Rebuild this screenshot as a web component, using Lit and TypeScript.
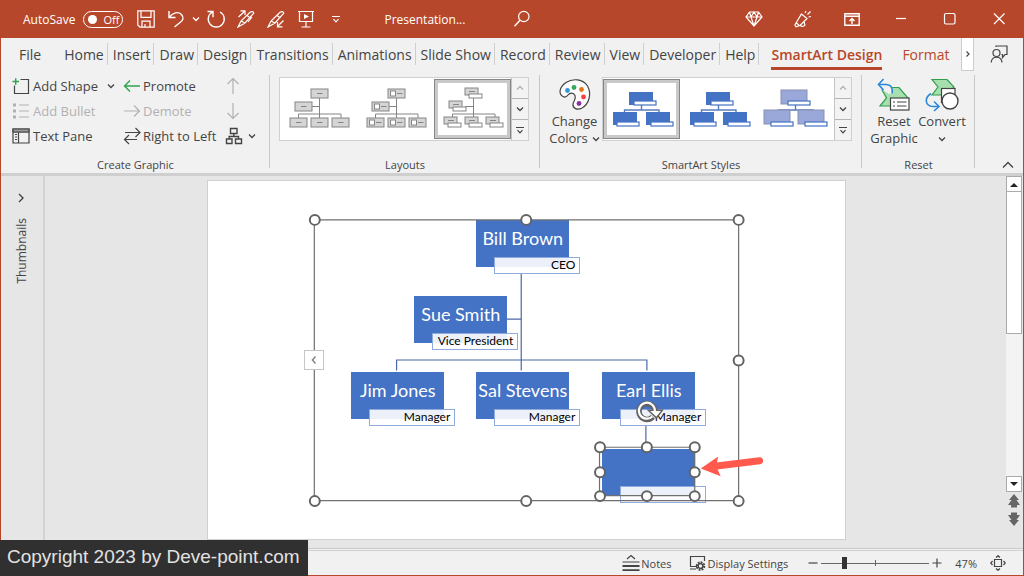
import { LitElement, html, css, svg } from "lit";
import { customElement } from "lit/decorators.js";
import { classMap } from "lit/directives/class-map.js";

type Node = { name: string; role: string; x: number; y: number };

const NODES: Node[] = [
  { name: "Bill Brown", role: "CEO", x: 268, y: 39 },
  { name: "Sue Smith", role: "Vice President", x: 206, y: 115 },
  { name: "Jim Jones", role: "Manager", x: 143, y: 191 },
  { name: "Sal Stevens", role: "Manager", x: 268, y: 191 },
  { name: "Earl Ellis", role: "Manager", x: 394, y: 191 },
  { name: "", role: "", x: 394, y: 268 },
];

const HANDLES: [number, number][] = [
  [107, 39], [319, 39], [532, 39], [532, 180], [107, 321], [319, 321], [532, 321],
  [393, 267], [440, 267], [488, 267], [393, 292], [488, 292], [393, 316], [440, 316], [488, 316],
];

const TABS = ["Home", "Insert", "Draw", "Design", "Transitions", "Animations", "Slide Show", "Record", "Review", "View", "Developer", "Help"];

const icon = (w: number, h: number, body: unknown) =>
  html`<svg class="icon" width=${w} height=${h} viewBox="0 0 ${w} ${h}" aria-hidden="true">${body}</svg>`;

const chevron = (w = 8) => icon(w, 8, svg`<path d="M1 2.5 L${w / 2} 5.5 L${w - 1} 2.5" stroke-width="1.3"/>`);

const I = {
  save: () => icon(18, 18, svg`<path d="M.8 .8H17.2V17.2H3L.8 15Z M4 .8V7.4H14V.8 M5 17V11.2H13V17 M8 17V14"/>`),
  undo: () => icon(18, 18, svg`<path d="M2 1V7.5H8.5 M2 7.5C6 2.5 11 1.200 14.200 4.200C17.500 7.500 16 10.500 13 12.500L7.500 17" stroke-width="1.4"/>`),
  redo: () => icon(20, 18, svg`<path d="M1.500 1.500H7V7.300 M6.500 2A8 8 0 1 0 14 2" stroke-width="1.4"/>`),
  penUp: () => icon(18, 18, svg`<path d="M1 17L4 11L13 2.200Q16 .6 16.800 3.200L8 13Z M4 11L8 13 M10 5.500L13.500 8 M15 7L11 12 M1.500 7L8 1 M3.500 .8H8V5"/>`),
  penDown: () => icon(18, 18, svg`<path d="M1 17L4 11L13 2.200Q16 .6 16.800 3.200L8 13Z M4 11L8 13 M10 5.500L13.500 8 M16.500 10.500L10.500 16.500 M10.500 12V16.800H15.500"/>`),
  present: () => icon(18, 18, svg`<path d="M1 1.500H17 M2.500 1.500V11.500H15.500V1.500 M9 11.500V17 M4.500 17H13.500"/><path d="M7 4L12 6.500L7 9Z" fill="currentColor" stroke="none"/>`),
  more: () => icon(10, 8, svg`<path d="M1 1.500H9 M2.500 4.200L5 6.800L7.500 4.200"/>`),
  search: () => icon(18, 18, svg`<circle cx="10.800" cy="6.500" r="5.200"/><path d="M7 10.300L1.500 16.200" stroke-width="1.4"/>`),
  gem: () => icon(18, 16, svg`<path d="M4.500 1H13.500L17 6L9 15L1 6Z M1 6H17 M6 6L9 15L12 6L9 1L6 6L4.500 1 M12 6L13.500 1"/>`),
  horn: () => icon(18, 18, svg`<path d="M7.500 4L13 8.500L6 15.500L2 16.800L.9 15L2 13Z M2 12.500L5.500 15.800 M6 15.500Q9 17.500 11 15.200L10 12 M11 3L12 1 M13.500 4.500L16.500 1.500 M14.500 7L17 6.500"/>`),
  ribbon: () => icon(16, 13, svg`<path d="M.8 .8H15.200V12.200H.8Z M.8 3.300H15.200 M8 11V5.500 M5.500 8L8 5.500L10.500 8" stroke-width="1.4"/>`),
  min: () => icon(14, 14, svg`<path d="M2 6.500H12"/>`),
  max: () => icon(14, 14, svg`<rect x="1.500" y="1.500" width="10.500" height="10.500" rx="1.500"/>`),
  close: () => icon(14, 14, svg`<path d="M2 1.500L12.500 12 M12.500 1.500L2 12"/>`),
  share: () => icon(18, 18, svg`<path d="M6 2V1H17V9.500H15L12.500 12.500V9.500H11.500"/><circle cx="6.500" cy="8" r="3.500"/><path d="M1.200 17.500C1.500 10.500 11.500 10.500 12 17.500"/>`),
  addShape: () => icon(18, 18, svg`<path d="M8.500 2.500H16.500V16.500H2.500V8.500"/><path class="green" d="M.5 4.500H7 M3.700 1.200V7.700" stroke-width="1.400"/>`),
  bullet: () => icon(18, 18, svg`<path d="M7 3H17 M7 9H17 M7 15H17"/><path d="M1 1.500h3v3H1z M1 7.500h3v3H1z M1 13.500h3v3H1z" fill="currentColor" stroke="none"/>`),
  pane: () => icon(18, 16, svg`<path d="M1 1H17V15H1Z M6.500 4V15 M1 4H17"/><path d="M1 1H17V4H1Z" fill="#999"/><path d="M3 6.500H5 M3 9H5 M3 11.500H5"/>`),
  left: () => icon(18, 14, svg`<path class="green" d="M17 7H1.500 M7 1.500L1.500 7L7 12.500" stroke-width="1.400"/>`),
  right: () => icon(18, 14, svg`<path d="M1 7H16.500 M11 1.500L16.500 7L11 12.500"/>`),
  swap: () => icon(18, 18, svg`<path d="M2 5.500H17 M12.500 1L17 5.500L12.500 10 M14 12.500H1.500 M6 8L1.500 12.500L6 17"/>`),
  up: () => icon(14, 18, svg`<path d="M7 17V1.500 M1.500 7L7 1.500L12.500 7"/>`),
  down: () => icon(14, 18, svg`<path d="M7 1V16.500 M1.500 11L7 16.500L12.500 11"/>`),
  tree: () => icon(18, 18, svg`<path d="M5.500 1.500H12V6.500H5.500Z M1.500 12H7V16.500H1.500Z M10.500 12H16.500V16.500H10.500Z M8.800 6.500V9.500 M4.200 12V9.500H13.500V12" stroke-width="1.400"/>`),
  palette: () => icon(34, 34, svg`<path d="M5 18.500C0 15.500 1.500 9 8 4.500C15 0 25 1 29.500 8C34 16 31 26 24 30C19 32.500 14.500 30.500 15 26C15.500 23 18.500 21 17 17.500C15.500 14.500 12 14.500 10 17C8.500 19 7 19.800 5 18.500Z" fill="#fbfbfb"/>
    <g stroke="none"><circle cx="9.500" cy="12.500" r="2.400" fill="#2f95dc"/><circle cx="16" cy="9.500" r="2.400" fill="#3aa658"/><circle cx="23.500" cy="11.500" r="2.400" fill="#e8740c"/><circle cx="25.500" cy="19" r="2.400" fill="#fa3e3e"/><circle cx="21" cy="25.500" r="2.400" fill="#8f2fa5"/></g>`),
  reset: () => icon(34, 34, svg`<path d="M16 9.500H22L31 20V28H3L9.500 20L5 12Z" fill="#a8dfae" stroke="#2f9e4f"/><path d="M2 6.500H9C14 6.500 16 10 15 15.500L12 16L4 11Z" fill="#f1f1f1" stroke="none"/><path d="M2 6.500H9C14 6.500 16 10 15 15.500" fill="none" stroke="#2b88d8" stroke-width="1.600"/><path d="M6.500 1L1.500 6.500L6.500 12" stroke="#2b88d8" stroke-width="1.600"/><rect x="13.500" y="20" width="18.500" height="12" fill="#fff"/><path d="M16 24H18 M20 24H29.500 M16 28H18 M20 28H29.500"/>`),
  convert: () => icon(34, 34, svg`<path d="M7 1.500H22L29 9L22 17H7L13 9Z" fill="#a8dfae" stroke="#2f9e4f"/><rect x="16.500" y="10.500" width="13.500" height="14" fill="#fff"/><circle cx="25" cy="23" r="8" fill="#fff" stroke-width="1.400"/><path d="M6 15.500C-1 20 0 28 8 28.500H13.500" stroke="#2b88d8" stroke-width="1.600"/><path d="M9 23.500L14 28.500L9 33" stroke="#2b88d8" stroke-width="1.600"/>`),
  notes: () => icon(18, 18, svg`<path d="M5 5L9 1.500L13 5 M.5 8H17.500"/><path d="M.5 12H17.500 M.5 16.200H17.500" stroke-width="1.800"/>`),
  display: () => icon(18, 16, svg`<path d="M8 11.500H1.500V1.500H15.500V6 M1 14H7"/><circle cx="11.500" cy="11" r="3.500" stroke-width="2.500" stroke-dasharray="1.700 1"/><circle cx="11.500" cy="11" r="2.300"/>`),
  fit: () => icon(16, 16, svg`<path d="M4.500 4.500H11.500V11.500H4.500Z M6 2.500L8 .7L10 2.500 M6 13.500L8 15.300L10 13.500 M2.500 6L.7 8L2.500 10 M13.500 6L15.300 8L13.500 10"/>`),
};

const layoutThumb = (kind: "plain" | "picture" | "titled") => {
  const titled = kind === "titled";
  const spots = titled
    ? [[30, 10], [14, 23], [9, 39], [30, 39], [51, 39]]
    : [[30, 11], [14, 24], [9, 40], [30, 40], [51, 40]];
  return html`<svg class="thumb" width="76" height="62" viewBox="0 0 76 62" aria-hidden="true">
    <path class="wire" d="M38.500 18V40 M30 28.500H38.500 M17.500 40V36H60V40"/>
    ${spots.map(([x, y]) => titled
      ? svg`<rect class="grey" x=${x} y=${y} width="13" height="7"/><path class="wire" d="M${x + 4} ${y + 3.5}h6"/><rect class="blank" x=${x + 4} y=${y + 6} width="13" height="4"/>`
      : svg`<rect class="grey" x=${x} y=${y} width="17" height="9"/><path class="wire" d="M${kind === "picture" ? x + 9 : x + 6} ${y + 4.5}h5.500"/>
          ${kind === "picture" ? svg`<rect class="blank" x=${x + 2.5} y=${y + 2} width="5" height="5"/>` : null}`)}
  </svg>`;
};

const styleThumb = (soft: boolean) => {
  const boxes = soft ? [[23, 12], [6, 32], [40, 32]] : [[25, 14], [9, 34], [42, 34]];
  const tags = [[30, 23], [13, 44], [47, 44]];
  return html`<svg class=${classMap({ thumb: true, soft })} width="76" height="62" viewBox="0 0 76 62" aria-hidden="true">
    <path class="link" d="M37.500 27V32 M20.500 35V32H55V35"/>
    ${boxes.map(([x, y]) => svg`<rect class="solid" x=${x} y=${y} width=${soft ? 26 : 24} height=${soft ? 14 : 13}/>`)}
    ${tags.map(([x, y]) => svg`<rect class="tag" x=${x} y=${y} width="22" height="4"/>`)}
  </svg>`;
};

@customElement("app-root")
export class AppRoot extends LitElement {
  static styles = css`
    :host { display: block; height: 100vh; font-family: "Open Sans", "Noto Sans", sans-serif; color: #444; }
    * { box-sizing: border-box; }
    button, a, input { font: inherit; color: inherit; }
    button { border: 0; padding: 0; margin: 0; background: none; display: flex; align-items: center; }
    a { text-decoration: none; }
    .icon { fill: none; stroke: currentColor; stroke-width: 1.2; flex: none; display: block; }
    .green { stroke: #2ea44f; }
    .window { position: relative; height: 100%; display: flex; flex-direction: column; border: solid #b7472a; border-width: 0 1px 1px; background: #f1f1f1; }

    .titlebar { height: 38px; flex: none; display: flex; align-items: center; background: #b7472a; color: #fff; font-size: 12px; padding-left: 22px; }
    .titlebar button { justify-content: center; width: 30px; height: 38px; }
    .titlebar .slim { width: 10px; }
    .autosave { display: flex; align-items: center; gap: 8px; margin-right: 8px; }
    .titlebar .autosave button { width: 40px; height: 17px; border: 1px solid #fff; border-radius: 9px; justify-content: flex-start; gap: 6px; padding-left: 4px; font-size: 11px; }
    .dot { width: 9px; height: 9px; border-radius: 50%; background: #fff; }
    .doc { margin-left: 33px; width: 123px; }
    .controls { display: flex; margin-left: auto; }
    .titlebar .controls button { width: 49px; }

    .tabs { height: 35px; flex: none; display: flex; align-items: flex-start; padding-left: 13px; font-size: 14px; }
    .tab { height: 32px; padding: 0 4px 0 5px; display: flex; align-items: center; position: relative; white-space: nowrap; }
    .tab.file { padding: 0 18px 0 5px; }
    .rule::after { content: ""; position: absolute; right: 0; top: 5px; height: 22px; width: 1px; background: #cfcfcf; }
    .tab.context { color: #b7472a; margin-left: 12px; padding: 0; }
    .tab.current { font-weight: 600; border-bottom: 3px solid #b7472a; padding-top: 3px; }
    .tab.format { margin-left: 20px; }
    .scroller { width: 13px; height: 33px; justify-content: center; background: #fff; border: 1px solid #ccc; border-top: 0; margin-left: auto; }
    .share { width: 49px; height: 32px; justify-content: center; }

    .ribbon { height: 100px; flex: none; display: flex; font-size: 13px; }
    .group { height: 99px; display: flex; flex-direction: column; background: linear-gradient(#c8c8c8, #c8c8c8) right top 2px / 1px 93px no-repeat; }
    .body { flex: 1; display: flex; align-items: flex-start; }
    .caption { height: 15px; line-height: 15px; font-size: 11px; text-align: center; }
    .create .body { padding-left: 11px; gap: 8px; }
    .create { width: 269px; }
    .layouts { width: 270px; }
    .styles { width: 322px; }
    .resetgroup { width: 113px; }
    .col { display: flex; flex-direction: column; }
    .col button { height: 25px; gap: 3px; white-space: nowrap; }
    .col.first { width: 103px; }
    .col.second { width: 94px; }
    .col.second button { gap: 2px; }
    .col.first button .icon:last-child:not(:first-child) { margin-left: auto; }
    .col.third button { gap: 5px; }
    .col.third .arrow { padding-left: 1px; }
    .off { color: #b1b1b1; }
    .gallery { height: 64px; display: flex; background: #fff; border: 1px solid #d0d0d0; margin-top: 4px; }
    .layouts .body { padding-left: 9px; }
    .option { width: 77px; height: 62px; justify-content: center; }
    .chosen { border: 1px solid #868686; box-shadow: inset 0 0 0 3px #c9c9c9; height: 60px; align-self: center; }
    .thumb { flex: none; display: block; margin: 0 -1px; }
    .wire { fill: none; stroke: #858585; stroke-width: 1; }
    .grey { fill: #d5d5d5; stroke: #858585; }
    .blank { fill: #fff; stroke: #858585; }
    .solid { fill: #4472c4; }
    .soft .solid { fill: #9aa8d9; stroke: #8790ae; stroke-width: 1; }
    .tag { fill: #fff; stroke: #4472c4; stroke-width: 1.2; }
    .link { fill: none; stroke: #5a7cbf; stroke-width: 1.4; }
    .steps { width: 17px; height: 62px; display: flex; flex-direction: column; background: #f3f3f3; border-left: 1px solid #c4c4c4; }
    .steps button { flex: 1; justify-content: center; border-bottom: 1px solid #b5b5b5; }
    .steps button:last-child { border-bottom: 0; }
    .flip { transform: rotate(180deg); }
    .big { flex-direction: column; line-height: 17px; width: 48px; padding-top: 5px; }
    .big .label { margin-top: 1px; display: block; }
    .styles .big { width: 62px; padding-left: 7px; }
    .line { display: flex; align-items: center; justify-content: center; gap: 4px; height: 17px; }
    .resetgroup .body { padding-left: 8px; }
    .collapse { margin-left: auto; align-self: flex-end; height: 16px; padding-right: 9px; }

    .work { flex: 1; min-height: 0; display: flex; background: #e6e6e6; border-top: 3px solid #cfcfcf; border-bottom: 1px solid #c9c9c9; }
    .side { width: 44px; border-right: 2px solid #d2d2d2; display: flex; flex-direction: column; align-items: center; padding: 17px 2px 0 0; gap: 15px; font-size: 12px; }
    .vertical { writing-mode: vertical-rl; transform: rotate(180deg); }
    .canvas { flex: 1; display: flex; justify-content: center; padding: 5px 0 9px 3px; min-width: 0; }
    .slide { position: relative; height: 100%; aspect-ratio: 16 / 9; background: #fff; outline: 1px solid #cfcfcf; flex: none; }
    .node { position: absolute; width: 93px; height: 47px; background: #4472c4; color: #fff; font-family: Lato, sans-serif; font-size: 18px; line-height: 37px; text-align: center; white-space: nowrap; }
    .role { position: absolute; left: 18px; top: 37px; width: 86px; height: 17px; border: 1px solid #8faadc; background: rgba(255, 255, 255, .9); color: #000; font-size: 12px; line-height: 13px; text-align: right; padding-right: 4px; }
    .overlay { position: absolute; inset: 0; width: 100%; height: 100%; overflow: visible; fill: none; pointer-events: none; }
    .wires { stroke: #4a69a8; stroke-width: 1.2; }
    .frame { stroke: #707070; stroke-width: 1.2; }
    .handle { fill: #fff; stroke: #636363; stroke-width: 2; }
    .opener { position: absolute; left: 96px; top: 169px; width: 20px; height: 20px; background: #fff; border: 1px solid #c6c6c6; justify-content: center; color: #888; }
    .scroll { width: 18px; display: flex; flex-direction: column; align-items: center; }
    .scroll button { width: 16px; height: 16px; flex: none; background: #fff; border: 1px solid #ababab; justify-content: center; color: #222; }
    .track { flex: 1; width: 16px; background: #f3f3f3; }
    .grip { height: 50%; background: #fff; border: 1px solid #ababab; border-top: 0; }
    .scroll .page { background: none; border: 0; height: 18px; color: #666; }
    .scroll .page.next { margin-bottom: 20px; }
    .fill { fill: currentColor; stroke: none; }

    .status { height: 25px; flex: none; display: flex; align-items: center; justify-content: flex-end; border-top: 1px solid #d0d0d0; margin-top: 1px; font-size: 11px; padding-right: 17px; }
    .status button { gap: 1px; }
    .display { margin: 0 19px 0 17px; }
    .zoom { appearance: none; width: 108px; height: 16px; margin: 0 2px; background: linear-gradient(#666, #666) 50% 50% / 1px 6px no-repeat, linear-gradient(#666, #666) 50% 50% / 100% 1px no-repeat; }
    .zoom::-webkit-slider-thumb { appearance: none; width: 5px; height: 12px; background: #333; }
    .pct { margin: 0 13px 0 12px; }
    .credit { position: absolute; left: -1px; bottom: -1px; height: 36px; padding: 0 8px 0 7px; line-height: 34px; background: #303030; color: #e2e2e2; font-family: "Liberation Sans", Arial, sans-serif; font-size: 19px; }
  `;

  private steps() {
    return html`<div class="steps">
      <button class="off" aria-label="Previous row"><span class="flip">${chevron()}</span></button>
      <button aria-label="Next row">${chevron()}</button>
      <button aria-label="More">${I.more()}</button>
    </div>`;
  }

  private node(n: Node) {
    return html`<div class="node" style="left:${n.x}px;top:${n.y}px">${n.name}<div class="role">${n.role}</div></div>`;
  }

  render() {
    return html`<div class="window">
      <header class="titlebar">
        <div class="autosave"><span id="autosave">AutoSave</span><button role="switch" aria-checked="false" aria-labelledby="autosave"><span class="dot"></span>Off</button></div>
        <button aria-label="Save">${I.save()}</button>
        <button aria-label="Undo">${I.undo()}</button>
        <button class="slim" aria-label="Undo history">${chevron()}</button>
        <button aria-label="Redo">${I.redo()}</button>
        <button aria-label="Pick up style">${I.penUp()}</button>
        <button aria-label="Apply style">${I.penDown()}</button>
        <button aria-label="Start slide show">${I.present()}</button>
        <button aria-label="Customize toolbar">${I.more()}</button>
        <span class="doc">Presentation...</span>
        <button aria-label="Search">${I.search()}</button>
        <div class="controls">
          <button aria-label="Premium">${I.gem()}</button>
          <button aria-label="What's new">${I.horn()}</button>
          <button aria-label="Ribbon display">${I.ribbon()}</button>
          <button aria-label="Minimize">${I.min()}</button>
          <button aria-label="Maximize">${I.max()}</button>
          <button aria-label="Close">${I.close()}</button>
        </div>
      </header>

      <nav class="tabs">
        <a class="tab file" href="#file">File</a>
        ${TABS.map((t) => html`<a class="tab rule" href="#${t}">${t}</a>`)}
        <a class="tab context current" href="#smartart">SmartArt Design</a>
        <a class="tab context format" href="#format">Format</a>
        <button class="scroller" aria-label="More tabs">${icon(6, 8, svg`<path d="M1.500 1.500L4 4L1.500 6.500"/>`)}</button>
        <button class="share" aria-label="Share">${I.share()}</button>
      </nav>

      <section class="ribbon">
        <div class="group create">
          <div class="body">
            <div class="col first">
              <button>${I.addShape()}Add Shape ${chevron()}</button>
              <button class="off" disabled>${I.bullet()}Add Bullet</button>
              <button>${I.pane()}Text Pane</button>
            </div>
            <div class="col second">
              <button>${I.left()}Promote</button>
              <button class="off" disabled>${I.right()}Demote</button>
              <button>${I.swap()}Right to Left</button>
            </div>
            <div class="col third">
              <button class="off arrow" disabled aria-label="Move up">${I.up()}</button>
              <button class="off arrow" disabled aria-label="Move down">${I.down()}</button>
              <button aria-label="Layout">${I.tree()}${chevron()}</button>
            </div>
          </div>
          <div class="caption">Create Graphic</div>
        </div>
        <div class="group layouts">
          <div class="body">
            <div class="gallery">
              <button class="option" aria-label="Organization chart">${layoutThumb("plain")}</button>
              <button class="option" aria-label="Picture organization chart">${layoutThumb("picture")}</button>
              <button class="option chosen" aria-label="Name and title organization chart">${layoutThumb("titled")}</button>
              ${this.steps()}
            </div>
          </div>
          <div class="caption">Layouts</div>
        </div>
        <div class="group styles">
          <div class="body">
            <button class="big">${I.palette()}<span class="label">Change<span class="line">Colors ${chevron()}</span></span></button>
            <div class="gallery">
              <button class="option chosen" aria-label="Simple fill">${styleThumb(false)}</button>
              <button class="option" aria-label="White outline">${styleThumb(false)}</button>
              <button class="option" aria-label="Subtle effect">${styleThumb(true)}</button>
              ${this.steps()}
            </div>
          </div>
          <div class="caption">SmartArt Styles</div>
        </div>
        <div class="group resetgroup">
          <div class="body">
            <button class="big">${I.reset()}<span class="label">Reset<br>Graphic</span></button>
            <button class="big">${I.convert()}<span class="label">Convert<span class="line">${chevron()}</span></span></button>
          </div>
          <div class="caption">Reset</div>
        </div>
        <button class="collapse" aria-label="Collapse ribbon">${icon(12, 8, svg`<path d="M1 6.500L6 1.500L11 6.500" stroke-width="1.400"/>`)}</button>
      </section>

      <main class="work">
        <aside class="side">
          <button aria-label="Expand thumbnails">${icon(8, 10, svg`<path d="M2 1L6 5L2 9" stroke-width="1.400"/>`)}</button>
          <span class="vertical">Thumbnails</span>
        </aside>
        <div class="canvas">
          <div class="slide">
            <svg class="overlay wires" viewBox="0 0 638 359" aria-hidden="true">
              <path d="M314 92V190 M299 138.500H314 M189 190V179.500H440V190 M439 245V268"/>
            </svg>
            ${NODES.map((n) => this.node(n))}
            <svg class="overlay" viewBox="0 0 638 359" aria-hidden="true">
              <path class="frame" d="M106.500 39H532V320.500H106.500Z M392.500 267H488V315.500H392.500Z"/>
              ${HANDLES.map(([x, y]) => svg`<circle class="handle" cx=${x} cy=${y} r="5"/>`)}
              <path d="M446 236.500A8 8 0 1 1 448 230" stroke="#636363" stroke-width="5.500"/>
              <path d="M441.500 230H455.500L449.500 237.500Z" fill="#fff" stroke="#636363" stroke-width="1.500"/>
              <path d="M445.500 236.200A8 8 0 1 1 448 231" stroke="#fff" stroke-width="2.200"/>
              <path d="M553 280.500L508 286" stroke="#ff5a4d" stroke-width="7" stroke-linecap="round"/>
              <path d="M494 288.300L511.500 276.300L509.500 286L514 296Z" fill="#ff5a4d"/>
            </svg>
            <button class="opener" aria-label="Open text pane">${icon(8, 10, svg`<path d="M5.500 1.500L2.500 5L5.500 8.500" stroke-width="1.600"/>`)}</button>
          </div>
        </div>
        <div class="scroll">
          <button aria-label="Scroll up">${icon(8, 5, svg`<path class="fill" d="M0 5L4 1L8 5Z"/>`)}</button>
          <div class="track"><div class="grip"></div></div>
          <button aria-label="Scroll down">${icon(8, 5, svg`<path class="fill" d="M0 0L4 4L8 0Z"/>`)}</button>
          <button class="page" aria-label="Previous slide">${icon(12, 14, svg`<path class="fill" d="M6 0L11 6H8.500L12 11H9V13.500H3V11H0L3.500 6H1Z"/>`)}</button>
          <button class="page next" aria-label="Next slide">${icon(12, 14, svg`<path class="fill" d="M6 14L11 8H8.500L12 3H9V.5H3V3H0L3.500 8H1Z"/>`)}</button>
        </div>
      </main>

      <footer class="status">
        <button>${I.notes()}Notes</button>
        <button class="display">${I.display()}Display Settings</button>
        <button aria-label="Zoom out">${icon(12, 12, svg`<path d="M1.500 6H10.500"/>`)}</button>
        <input class="zoom" type="range" min="10" max="190" value="47" aria-label="Zoom">
        <button aria-label="Zoom in">${icon(12, 12, svg`<path d="M1.500 6H10.500 M6 1.500V10.500"/>`)}</button>
        <span class="pct">47%</span>
        <button aria-label="Fit slide to window">${I.fit()}</button>
      </footer>
      <div class="credit">Copyright 2023 by Deve-point.com</div>
    </div>`;
  }
}
